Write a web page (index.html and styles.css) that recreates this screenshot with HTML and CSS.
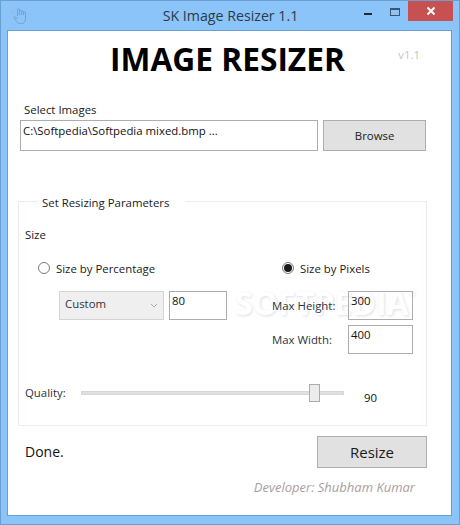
FILE: index.html
```html
<!DOCTYPE html>
<html lang="en">
  <head>
    <meta charset="UTF-8" />
    <meta name="viewport" content="width=device-width, initial-scale=1.0" />
    <title>SK Image Resizer 1.1</title>
    <link rel="stylesheet" href="styles.css">
  </head>
  <body>
    <div class="window">
      <!-- Title bar -->
      <div class="titlebar">
        <svg class="app-icon" width="18" height="18" viewBox="0 0 18 18" fill="none" stroke="#7f9fbe" stroke-width="1">
          <path d="M7.500 9V3a1 1 0 0 1 2 0V8M9.500 4a1 1 0 0 1 2 0V8M11.500 5a1 1 0 0 1 2 0V8M13.500 6a1 1 0 0 1 2 0V12c0 2.500-1.500 4.500-4 4.500H9.500c-1.500 0-2.500-1-3-2L4 11c-.5-1 .8-1.800 1.500-1l2 2" />
          <path d="M4.500 1.500 1 5l3.500 3M1.500 5h4" stroke="#9db9d4" />
        </svg>
        <span class="title">SK Image Resizer 1.1</span>
        <div class="controls">
          <span class="min"></span>
          <span class="max"></span>
          <span class="close">
            <svg width="10" height="10" viewBox="0 0 10 10" stroke="#fff" stroke-width="2"><path d="M1.500 1.500l7 7M8.500 1.500l-7 7" /></svg>
          </span>
        </div>
      </div>

      <div class="content">
        <div class="watermark">SOFTPEDIA<sup>®</sup></div>

        <div class="header">
          <h1>IMAGE RESIZER</h1>
          <span class="version">v1.1</span>
        </div>

        <label class="select-label">Select Images</label>
        <div class="file-row">
          <div class="field file-path">C:\Softpedia\Softpedia mixed.bmp ...</div>
          <button class="btn browse">Browse</button>
        </div>

        <!-- Resizing parameters -->
        <fieldset class="params">
          <legend>Set Resizing Parameters</legend>
          <div class="size-label">Size</div>
          <div class="columns">
            <div class="col-left">
              <div class="radio-row">
                <span class="radio"></span>
                <span>Size by Percentage</span>
              </div>
              <div class="percent-row">
                <div class="combo">
                  <span class="combo-text">Custom</span>
                  <svg width="8" height="5" viewBox="0 0 8 5" fill="none" stroke="#a8a8a8"><path d="M1 1l3 3 3-3" /></svg>
                </div>
                <div class="field percent-value">80</div>
              </div>
            </div>
            <div class="col-right">
              <div class="radio-row">
                <span class="radio checked"></span>
                <span>Size by Pixels</span>
              </div>
              <div class="pixel-row">
                <span class="pixel-label">Max Height:</span>
                <div class="field pixel-value">300</div>
              </div>
              <div class="pixel-row">
                <span class="pixel-label">Max Width:</span>
                <div class="field pixel-value">400</div>
              </div>
            </div>
          </div>
          <div class="quality-row">
            <span class="quality-label">Quality:</span>
            <div class="track"><span class="thumb"></span></div>
            <span class="quality-value">90</span>
          </div>
        </fieldset>

        <div class="footer">
          <span class="status">Done.</span>
          <button class="btn resize">Resize</button>
        </div>
        <div class="developer">Developer: Shubham Kumar</div>
      </div>
    </div>
  </body>
</html>
```

FILE: styles.css
```css
html,
body {
  margin: 0;
  padding: 0;
}
body {
  font-family: "Open Sans", "Noto Sans", sans-serif;
  font-size: 11.4px;
  color: #1a1a1a;
}
.window {
  box-sizing: border-box;
  width: 460px;
  height: 525px;
  background-color: #8ac4f9;
  border: 1px solid #6b9fd0;
  padding: 0 7px 8px 6px;
  display: flex;
  flex-direction: column;
}
.titlebar {
  height: 29px;
  flex-shrink: 0;
  position: relative;
  display: flex;
  justify-content: center;
  align-items: flex-start;
}
.app-icon {
  position: absolute;
  left: 3px;
  top: 6px;
}
.title {
  font-size: 14.2px;
  line-height: 19px;
  margin-top: 5px;
  margin-left: 2px;
  color: #2c3a48;
}
.controls {
  position: absolute;
  right: -1px;
  top: 0;
  display: flex;
  align-items: flex-start;
}
.min {
  width: 8px;
  height: 2px;
  background-color: #1f2a35;
  margin: 12px 18px 0 0;
}
.max {
  box-sizing: border-box;
  width: 10px;
  height: 8px;
  border: 1px solid #3f5468;
  border-top-width: 2px;
  margin: 7px 8px 0 0;
}
.close {
  width: 45px;
  height: 20px;
  background-color: #c75050;
  display: flex;
  align-items: center;
  justify-content: center;
}
.content {
  flex: 1;
  background-color: #fff;
  border: 1px solid #6b9fd0;
  position: relative;
  padding: 0 25px 0 11px;
}
.header {
  height: 71px;
  position: relative;
  text-align: center;
}
h1 {
  margin: 0;
  padding-top: 6px;
  padding-left: 10px;
  font-size: 31.7px;
  line-height: 44px;
  font-weight: 700;
  color: #000;
}
.version {
  position: absolute;
  right: 6px;
  top: 16px;
  color: #c4c4c4;
}
.select-label {
  display: block;
  line-height: 16px;
  margin-left: 5px;
}
.file-row {
  display: flex;
  gap: 5px;
  margin-top: 2px;
  margin-left: 1px;
}
.field {
  box-sizing: border-box;
  border: 1px solid #adadad;
  line-height: 16px;
  color: #111;
}
.file-path {
  width: 299px;
  height: 31px;
  padding: 2px 2px;
}
.btn {
  box-sizing: border-box;
  font-family: inherit;
  background-color: #e1e1e1;
  border: 1px solid #adadad;
  color: #1a1a1a;
  padding: 0;
}
.browse {
  width: 103px;
  height: 31px;
  font-size: 11.4px;
}
.params {
  box-sizing: border-box;
  position: relative;
  width: 409px;
  height: 235px;
  margin: 40px 0 0 -1px;
  padding: 0 0 0 6px;
  border: 1px solid #f3e9ec;
  min-width: 0;
}
legend {
  margin-left: 12px;
  padding: 4px 16px 0 5px;
  line-height: 16px;
}
.size-label {
  line-height: 16px;
  margin-top: 16px;
}
.columns {
  display: flex;
  margin-top: 17px;
}
.col-left {
  width: 257px;
  padding-left: 13px;
  box-sizing: border-box;
}
.radio-row {
  display: flex;
  align-items: center;
  gap: 6px;
  height: 16px;
}
.radio {
  box-sizing: border-box;
  width: 12px;
  height: 12px;
  border: 1px solid #7a7a7a;
  border-radius: 50%;
  background-color: #fff;
  display: flex;
  align-items: center;
  justify-content: center;
}
.radio.checked::after {
  content: "";
  width: 8px;
  height: 8px;
  border-radius: 50%;
  background-color: #1a1a1a;
}
.percent-row {
  display: flex;
  gap: 5px;
  margin-top: 15px;
  margin-left: 21px;
}
.combo {
  box-sizing: border-box;
  width: 105px;
  height: 29px;
  background-color: #efefef;
  border: 1px solid #d4d4d4;
  display: flex;
  align-items: center;
  justify-content: space-between;
  padding: 0 5px;
  color: #333;
}
.combo-text {
  margin-bottom: 4px;
}
.percent-value {
  width: 58px;
  height: 29px;
  padding: 1px 2px;
}
.col-right {
  display: flex;
  flex-direction: column;
}
.pixel-row {
  display: flex;
  align-items: center;
  height: 29px;
  margin-left: -10px;
  margin-top: 5px;
}
.col-right .radio-row + .pixel-row {
  margin-top: 15px;
}
.pixel-label {
  width: 76px;
  color: #2a3340;
}
.pixel-value {
  width: 65px;
  height: 29px;
  padding: 1px 2px;
}
.quality-row {
  display: flex;
  align-items: flex-start;
  margin-top: 31px;
}
.quality-label {
  width: 56px;
  line-height: 16px;
  color: #2a3340;
}
.track {
  position: relative;
  width: 263px;
  height: 4px;
  margin-top: 6px;
  background-color: #dfe1e1;
  border: 1px solid #d6d8d8;
  box-sizing: border-box;
}
.thumb {
  position: absolute;
  left: 227px;
  top: -8px;
  box-sizing: border-box;
  width: 11px;
  height: 18px;
  background-color: #ececec;
  border: 1px solid #ababab;
}
.quality-value {
  margin-left: 20px;
  margin-top: 5px;
  line-height: 16px;
  color: #111;
}
.footer {
  display: flex;
  justify-content: space-between;
  margin-top: 10px;
  margin-left: -1px;
  width: 409px;
}
.status {
  font-size: 14px;
  line-height: 20px;
  margin-left: 7px;
  margin-top: 6px;
  color: #111;
}
.resize {
  width: 110px;
  height: 32px;
  font-size: 15px;
}
.developer {
  text-align: right;
  font-size: 13px;
  font-style: italic;
  color: #a89e9e;
  line-height: 16px;
  margin-top: 11px;
  padding-right: 11px;
}
/* sits behind the controls, only its shadow shows on the white */
.watermark {
  position: absolute;
  left: 227px;
  top: 254px;
  font-size: 32px;
  line-height: 36px;
  font-weight: 700;
  color: #fff;
  text-shadow: 1px 1px 3px rgba(0, 0, 0, 0.13);
  white-space: nowrap;
}
.watermark sup {
  font-size: 8px;
  vertical-align: top;
  line-height: 16px;
}
```
